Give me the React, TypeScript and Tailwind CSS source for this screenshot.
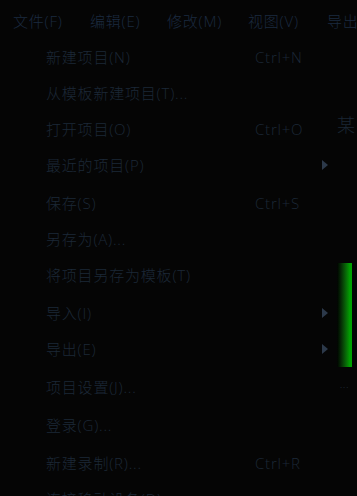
import React from "react";

const font = { fontFamily: '"Open Sans", "Noto Sans CJK SC", sans-serif' };

type Item = { label: string; shortcut?: string; sub?: boolean };

const groups: Item[][] = [
  [
    { label: "新建项目(N)", shortcut: "Ctrl+N" },
    { label: "从模板新建项目(T)..." },
    { label: "打开项目(O)", shortcut: "Ctrl+O" },
    { label: "最近的项目(P)", sub: true },
  ],
  [
    { label: "保存(S)", shortcut: "Ctrl+S" },
    { label: "另存为(A)..." },
    { label: "将项目另存为模板(T)" },
  ],
  [
    { label: "导入(I)", sub: true },
    { label: "导出(E)", sub: true },
  ],
  [{ label: "项目设置(J)..." }],
  [{ label: "登录(G)..." }],
  [{ label: "新建录制(R)...", shortcut: "Ctrl+R" }, { label: "连接移动设备(D)" }],
];

function Row({ item }: { item: Item }) {
  return (
    <div className="flex h-[36px] items-center pl-[46px] text-[15px] font-light tracking-[0.8px] text-[#1c2837]">
      <span className="w-[209px] whitespace-nowrap">{item.label}</span>
      <span className="w-[67px] whitespace-nowrap">{item.shortcut ?? ""}</span>
      {item.sub && (
        <svg width="6" height="10" viewBox="0 0 6 10">
          <path d="M0 0 L6 5 L0 10 Z" fill="#2c394a" />
        </svg>
      )}
    </div>
  );
}

export default function App() {
  return (
    <div className="relative h-[496px] w-[357px] overflow-hidden bg-[#050505]" style={font}>
      <div className="flex h-[39px] items-center pl-[13px] pt-[3px] text-[15px] font-light tracking-[0.8px] text-[#1b2a40] whitespace-nowrap">
        <span className="w-[77px] shrink-0">文件(F)</span>
        <span className="w-[77px] shrink-0">编辑(E)</span>
        <span className="w-[81px] shrink-0">修改(M)</span>
        <span className="w-[79px] shrink-0">视图(V)</span>
        <span className="shrink-0">导出</span>
      </div>
      <div className="flex">
        <div className="w-[335px] shrink-0">
          {groups.map((g, gi) => (
            <div key={gi} className={gi > 0 ? "pt-[2px]" : ""}>
              {g.map((it) => (
                <Row key={it.label} item={it} />
              ))}
            </div>
          ))}
        </div>
        <div className="flex flex-col pl-[2px]">
          <span className="mt-[76px] whitespace-nowrap text-[18px] font-light leading-[20px] text-[#1a2533]">某</span>
          <div className="mt-[128px] flex h-[104px] w-[15px]">
            <div className="h-full w-[13px] bg-gradient-to-r from-[#010401] to-[#00a200]" />
            <div className="h-full w-[2px] bg-[#00a000]" />
          </div>
          <span className="mt-[14px] pl-[3px] text-[8px] leading-[8px] tracking-[1px] text-[#232e3b]">...</span>
        </div>
      </div>
    </div>
  );
}
